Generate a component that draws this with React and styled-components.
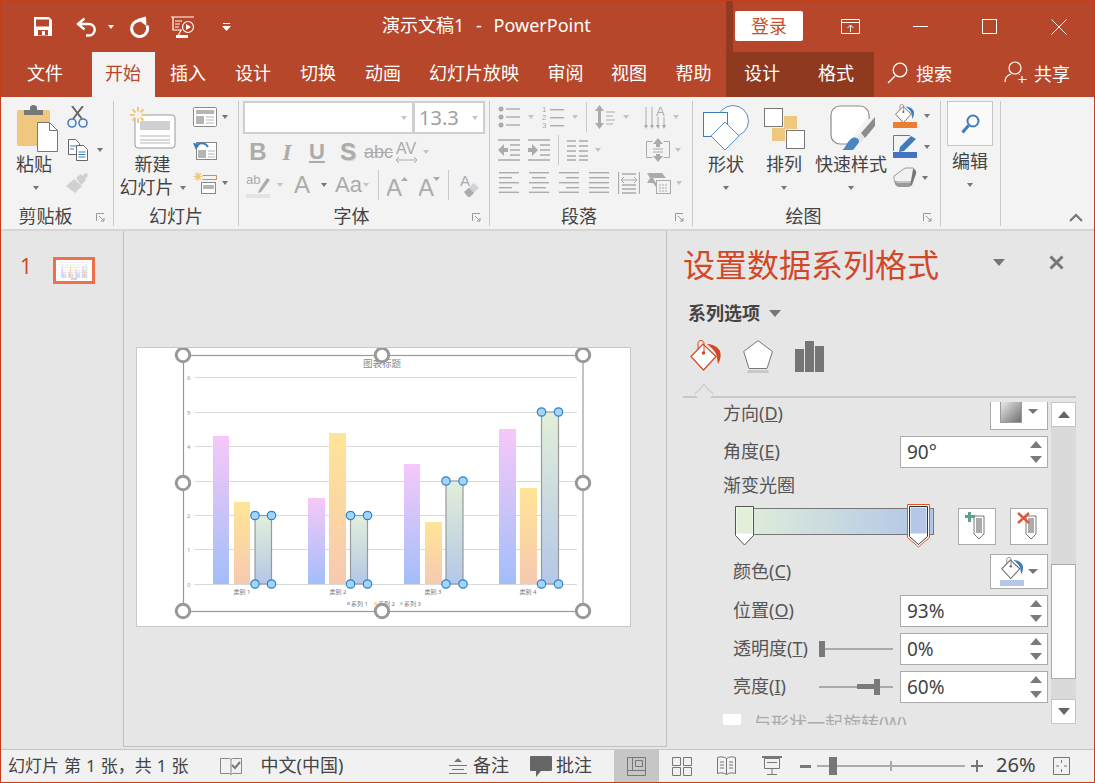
import React from "react";
import styled, { createGlobalStyle } from "styled-components";

const FONT = `"Noto Sans", "Noto Sans CJK SC", sans-serif`;
const RED = "#B7472A";
const ORANGE = "#D24726";
const GRAY = "#ABABAB";

const Global = createGlobalStyle`
  html, body { margin: 0; padding: 0; background: #E6E6E6; }
  * { box-sizing: border-box; }
`;

const Window = styled.div`
  width: 1095px;
  height: 783px;
  border: 1px solid #C43E1C;
  display: flex;
  flex-direction: column;
  overflow: hidden;
  font-family: ${FONT};
  font-size: 18px;
  color: #444;
`;

const Ico = styled.svg`
  display: block;
  flex: none;
  margin-left: ${(p) => p.$ml || 0}px;
`;

const Svg = ({ w, h, ml, children }) => (
  <Ico width={w} height={h} viewBox={`0 0 ${w} ${h}`} $ml={ml}>
    {children}
  </Ico>
);

const Caret = styled.i`
  display: block;
  flex: none;
  width: 0;
  height: 0;
  margin-left: ${(p) => p.$ml || 0}px;
  border-left: ${(p) => p.$s || 3.5}px solid transparent;
  border-right: ${(p) => p.$s || 3.5}px solid transparent;
  border-top: ${(p) => (p.$s ? p.$s * 1.1 : 4)}px solid ${(p) => p.$c || "#767676"};
`;

/* title bar */
const TitleBar = styled.header`
  height: 51px;
  flex: none;
  display: flex;
  align-items: center;
  background: ${RED};
  color: #fff;
`;

const Qat = styled.div`
  width: 381px;
  flex: none;
  display: flex;
  align-items: center;
  padding-left: 32px;
`;

const DocTitle = styled.div`
  white-space: pre;
  font-size: 18px;
  line-height: 24px;
  word-spacing: 1.2px;
  padding-bottom: 4px;
`;

const WindowControls = styled.div`
  margin-left: auto;
  width: 368px;
  height: 51px;
  flex: none;
  display: flex;
  align-items: center;
  border-left: 7px solid #93391F;
`;

const Login = styled.button`
  width: 68px;
  height: 30px;
  margin-left: 2px;
  margin-top: -2px;
  padding: 0;
  border: 0;
  border-radius: 2px;
  background: #fff;
  color: #C8502F;
  font: 18px/30px ${FONT};
`;

/* tabs */
const TabBar = styled.nav`
  height: 45px;
  flex: none;
  display: flex;
  background: ${RED};
  color: #fff;
`;

const Tab = styled.div`
  width: ${(p) => p.$w}px;
  margin-left: ${(p) => p.$ml || 0}px;
  padding-right: ${(p) => p.$pr || 0}px;
  padding-bottom: 4px;
  flex: none;
  display: flex;
  align-items: center;
  justify-content: center;
  line-height: 24px;
  background: ${(p) => (p.$active ? "#F3F3F3" : p.$context ? "#8F3A1F" : "transparent")};
  color: ${(p) => (p.$active ? RED : "#fff")};
`;

const TabExtra = styled.div`
  display: flex;
  align-items: center;
  margin-left: ${(p) => p.$ml}px;
  padding-bottom: 4px;
`;

const TabExtraText = styled.span`
  margin-left: ${(p) => p.$ml}px;
`;

/* ribbon */
const Ribbon = styled.section`
  height: 134px;
  flex: none;
  display: flex;
  padding-top: 4px;
  background: #F3F3F3;
  border-bottom: 2px solid #D6D6D6;
`;

const Group = styled.div`
  width: ${(p) => p.$w}px;
  height: 125px;
  flex: none;
  display: flex;
  flex-direction: column;
  border-right: 1px solid #C9C9C9;
`;

const GroupBody = styled.div`
  height: 102px;
  flex: none;
  display: flex;
  padding-left: ${(p) => p.$pl || 0}px;
`;

const GroupLabel = styled.div`
  position: relative;
  height: 23px;
  line-height: 26px;
  text-align: center;
  padding-right: ${(p) => p.$pr || 0}px;
  color: #444;
`;

const Launcher = styled.span`
  position: absolute;
  right: 8px;
  top: 10px;
`;

const BigTool = styled.div`
  width: ${(p) => p.$w}px;
  margin-left: ${(p) => p.$ml || 0}px;
  flex: none;
  display: flex;
  flex-direction: column;
  align-items: ${(p) => (p.$start ? "flex-start" : "center")};
  padding-top: 2px;
`;

const IconSlot = styled.div`
  height: 50px;
  display: flex;
  align-items: center;
  padding-left: ${(p) => p.$pl || 0}px;
`;

const ToolLine = styled.div`
  height: 23px;
  line-height: 23px;
  display: flex;
  align-items: center;
  white-space: nowrap;
`;

const SmallCol = styled.div`
  margin-left: ${(p) => p.$ml}px;
  margin-top: -1px;
  flex: none;
  display: flex;
  flex-direction: column;
`;

const SmallRow = styled.div`
  height: ${(p) => p.$h || 33}px;
  display: flex;
  align-items: center;
`;

const FontBoxes = styled.div`
  display: flex;
  margin-top: 1px;
`;

const FontBox = styled.div`
  width: ${(p) => p.$w}px;
  height: 33px;
  padding-right: 5px;
  padding-left: 4px;
  display: flex;
  align-items: center;
  justify-content: space-between;
  background: #fff;
  border: 2px solid #CFCFCF;
  margin-left: ${(p) => p.$ml || 0}px;
  color: #A0A0A0;
  font-size: 20px;
`;

const FontRow = styled.div`
  height: 26px;
  margin-top: ${(p) => p.$mt}px;
  display: flex;
  align-items: center;
`;

const Glyph = styled.span`
  width: ${(p) => p.$w}px;
  margin-left: ${(p) => p.$ml || 0}px;
  flex: none;
  text-align: center;
  font-family: ${(p) => p.$font || `"Liberation Sans", sans-serif`};
  font-size: ${(p) => p.$size || 22}px;
  font-weight: ${(p) => (p.$bold ? 700 : 400)};
  font-style: ${(p) => (p.$italic ? "italic" : "normal")};
  text-decoration: ${(p) => p.$deco || "none"};
  text-shadow: ${(p) => p.$shadow || "none"};
  line-height: 26px;
  color: ${GRAY};
`;

const VSep = styled.span`
  width: 1px;
  height: ${(p) => p.$h || 30}px;
  margin-left: ${(p) => p.$ml}px;
  flex: none;
  background: #C9C9C9;
`;

const StackCol = styled.div`
  flex: none;
  display: flex;
  flex-direction: column;
  margin-top: -1px;
`;

const EditTool = styled.div`
  width: 46px;
  margin-left: 6px;
  display: flex;
  flex-direction: column;
  align-items: center;
`;

const EditBox = styled.div`
  width: 46px;
  height: 45px;
  display: flex;
  align-items: center;
  justify-content: center;
  background: #FBFBFB;
  border: 1px solid #C6C6C6;
  margin-bottom: 4px;
`;

const CollapseSlot = styled.div`
  margin-left: auto;
  margin-right: 11px;
  align-self: flex-end;
  margin-bottom: 7px;
`;

/* main */
const Main = styled.main`
  height: 518px;
  flex: none;
  display: flex;
  background: #E6E6E6;
`;

const Thumbs = styled.aside`
  width: 123px;
  height: 516px;
  flex: none;
  display: flex;
  align-items: flex-start;
  padding: 26px 0 0 19px;
  border-right: 1px solid #C0C0C0;
`;

const ThumbNumber = styled.span`
  width: 33px;
  margin-top: -2px;
  font-size: 21px;
  line-height: 22px;
  color: ${ORANGE};
`;

const ThumbFrame = styled.div`
  width: 42px;
  height: 27px;
  border: 3px solid #F0704C;
  background: #fff;
`;

const Canvas = styled.div`
  width: 543px;
  height: 516px;
  flex: none;
  padding: 117px 0 0 13px;
  border-right: 1px solid #C0C0C0;
  border-bottom: 1px solid #C0C0C0;
`;

const Slide = styled.div`
  width: 493px;
  height: 278px;
  background: #fff;
  outline: 1px solid #C8C8C8;
`;

/* format pane */
const Pane = styled.aside`
  flex: 1;
  min-width: 0;
  display: flex;
  flex-direction: column;
`;

const PaneHead = styled.div`
  height: 40px;
  margin-top: 14px;
  padding: 0 30px 0 16px;
  display: flex;
  align-items: center;
`;

const PaneTitle = styled.h2`
  margin: 0;
  font-weight: 400;
  font-size: 32px;
  line-height: 40px;
  color: ${ORANGE};
`;

const PaneMenu = styled.div`
  margin-left: 54px;
  margin-top: -6px;
`;

const PaneClose = styled.div`
  margin-left: auto;
  margin-top: -6px;
`;

const PaneSub = styled.div`
  margin: 16px 0 0 21px;
  height: 24px;
  display: flex;
  align-items: center;
  font-weight: 700;
  line-height: 24px;
  color: #444;
`;

const PaneTabs = styled.div`
  height: 36px;
  margin: 15px 0 0 23px;
  display: flex;
  align-items: flex-start;
`;

const PaneRule = styled.div`
  position: relative;
  height: 2px;
  margin: 20px 18px 0 16px;
  background: #C8C8C8;
  &::after {
    content: "";
    position: absolute;
    left: 14px;
    top: -9px;
    width: 13px;
    height: 13px;
    transform: rotate(45deg);
    background: #E6E6E6;
    border-left: 1px solid #C8C8C8;
    border-top: 1px solid #C8C8C8;
  }
`;

const PaneScroll = styled.div`
  margin-top: 4px;
  height: 323px;
  display: flex;
`;

const Options = styled.div`
  width: 384px;
  flex: none;
  overflow: hidden;
  padding: 0 3px 0 56px;
  color: #555;
`;

const OptionRow = styled.div`
  height: ${(p) => p.$h || 32}px;
  margin-top: ${(p) => p.$mt ?? 6}px;
  padding-left: ${(p) => p.$pl || 0}px;
  display: flex;
  align-items: center;
  line-height: 24px;
`;

const OptionLabel = styled.span`
  margin-top: -2px;
  white-space: nowrap;
`;

const SpinBox = styled.div`
  width: 148px;
  height: 32px;
  margin-left: ${(p) => (p.$tight ? "7px" : "auto")};
  padding: 0 5px 0 6px;
  flex: none;
  display: flex;
  align-items: center;
  justify-content: space-between;
  background: #fff;
  border: 1px solid #ABABAB;
  font-size: 19px;
  color: #444;
`;

const SpinArrows = styled.div`
  display: flex;
  flex-direction: column;
  gap: 8px;
`;

const ArrowUp = styled.i`
  display: block;
  width: 0;
  height: 0;
  border-left: 6.5px solid transparent;
  border-right: 6.5px solid transparent;
  border-bottom: 7px solid #7A7A7A;
`;

const ArrowDown = styled.i`
  display: block;
  width: 0;
  height: 0;
  border-left: 6.5px solid transparent;
  border-right: 6.5px solid transparent;
  border-top: 7px solid #7A7A7A;
`;

const PickBox = styled.div`
  width: 58px;
  height: ${(p) => p.$h}px;
  margin-left: auto;
  padding: 0 9px 0 9px;
  flex: none;
  display: flex;
  align-items: ${(p) => (p.$top ? "flex-start" : "center")};
  justify-content: space-between;
  background: #fff;
  border: 1px solid #ABABAB;
`;

const PickCaret = styled.div`
  padding-top: ${(p) => p.$pt || 0}px;
`;

const DirSwatch = styled.div`
  width: 22px;
  height: 25px;
  background: linear-gradient(135deg, #F2F2F2, #6F6F6F);
  border: 1px solid #9A9A9A;
`;

const StopButton = styled.div`
  width: 38px;
  height: 37px;
  margin-left: ${(p) => p.$ml}px;
  display: flex;
  align-items: center;
  justify-content: center;
  background: #fff;
  border: 1px solid #ABABAB;
`;

const Slider = styled.div`
  position: relative;
  width: 74px;
  height: 2px;
  margin-left: auto;
  flex: none;
  background: ${GRAY};
`;

const SliderFill = styled.span`
  position: absolute;
  left: 38px;
  top: -2px;
  width: 20px;
  height: 5px;
  background: #7A7A7A;
`;

const SliderThumb = styled.span`
  position: absolute;
  left: ${(p) => p.$x}px;
  top: -7px;
  width: 6px;
  height: 16px;
  background: #7A7A7A;
`;

const CheckBox = styled.span`
  width: 18px;
  height: 18px;
  flex: none;
  background: #fff;
`;

const CheckLabel = styled.span`
  margin-left: 12px;
  white-space: nowrap;
  color: #ABABAB;
`;

const ScrollBar = styled.div`
  width: 25px;
  height: 322px;
  flex: none;
  display: flex;
  flex-direction: column;
  background: #DADADA;
`;

const ScrollButton = styled.div`
  height: 25px;
  flex: none;
  display: flex;
  align-items: center;
  justify-content: center;
  background: #fff;
  border: 1px solid #C6C6C6;
`;

const ScrollThumb = styled.div`
  height: 115px;
  margin-top: 137px;
  margin-bottom: 20px;
  background: #fff;
  border: 1px solid #ABABAB;
`;

/* status bar */
const StatusBar = styled.footer`
  height: 33px;
  flex: none;
  display: flex;
  align-items: center;
  background: #F1F1F1;
  border-top: 1px solid #C6C6C6;
  color: #444;
`;

const StatusText = styled.span`
  margin-left: ${(p) => p.$ml}px;
  padding-bottom: 4px;
  white-space: pre;
  font-size: ${(p) => p.$size || 18}px;
  word-spacing: ${(p) => p.$ws || 0}px;
`;

const StatusRight = styled.div`
  margin-left: auto;
  width: 645px;
  height: 100%;
  flex: none;
  display: flex;
  align-items: center;
`;

const ViewActive = styled.div`
  width: 45px;
  height: 100%;
  margin-left: 22px;
  flex: none;
  display: flex;
  align-items: center;
  justify-content: center;
  background: #C6C6C6;
`;

const ZoomTrack = styled.div`
  position: relative;
  width: 148px;
  height: 2px;
  margin-left: 6px;
  flex: none;
  background: ${GRAY};
`;

const ZoomTick = styled.span`
  position: absolute;
  left: 73px;
  top: -4px;
  width: 2px;
  height: 10px;
  background: ${GRAY};
`;

const ZoomThumb = styled.span`
  position: absolute;
  left: 12px;
  top: -8px;
  width: 8px;
  height: 18px;
  background: #777;
`;

/* icons */
const SaveIcon = () => (
  <Svg w={20} h={19}>
    <path
      fill="#fff"
      fillRule="evenodd"
      d="M1 0h15l3 3v16H1zM3 2.500v7h13v-7zM5 13v5.500h10V13zM9 14h3v4H9z"
    />
  </Svg>
);
const UndoIcon = () => (
  <Svg w={22} h={20} ml={23}>
    <path fill="none" stroke="#fff" strokeWidth="2.400" d="M8.500 1.500 2 7l6.500 5.500M2.500 7H13a5.700 5.700 0 0 1 0 11.500h-3" />
  </Svg>
);
const RedoIcon = () => (
  <Svg w={21} h={22} ml={15}>
    <path fill="none" stroke="#fff" strokeWidth="3" d="M11 4.500A8 8 0 1 0 18 9.500" />
    <path fill="#fff" d="M8 3 17 .5l.5 9.500z" />
  </Svg>
);
const ShowIcon = () => (
  <Svg w={24} h={22} ml={21}>
    <g fill="none" stroke="#fff" strokeWidth="1.200">
      <path d="M0 1h23M2 1v13h9M10 14l-3 6M11 5H4M9 8H4M8 11H4" />
      <circle cx="17" cy="11" r="5.500" />
    </g>
    <path fill="#fff" d="M15 8l5 3-5 3zM5 19h12v3H5z" />
  </Svg>
);
const CustomizeIcon = () => (
  <Svg w={9} h={8} ml={27}>
    <path fill="#fff" d="M1 0h7v1H1zM0 3h9L4.500 8z" />
  </Svg>
);
const RibbonModeIcon = () => (
  <Svg w={20} h={16} ml={38}>
    <path fill="none" stroke="#fff" d="M.5.500h18v14H.5zM.5 3.500h18M9.500 13V6.500M6.500 9l3-3 3 3" />
  </Svg>
);
const MinimizeIcon = () => (
  <Svg w={15} h={2} ml={52}>
    <rect width="15" height="1" fill="#fff" />
  </Svg>
);
const MaximizeIcon = () => (
  <Svg w={15} h={15} ml={54}>
    <rect x=".5" y=".5" width="14" height="14" fill="none" stroke="#fff" />
  </Svg>
);
const CloseIcon = () => (
  <Svg w={16} h={16} ml={54}>
    <path stroke="#fff" d="M.500.500l15 15M15.500.500l-15 15" />
  </Svg>
);
const SearchTabIcon = () => (
  <Svg w={21} h={22}>
    <path fill="none" stroke="#fff" strokeWidth="1.300" d="M1 21l7-7" />
    <circle cx="13" cy="8" r="6.800" fill="none" stroke="#fff" strokeWidth="1.300" />
  </Svg>
);
const PersonIcon = () => (
  <Svg w={23} h={23}>
    <circle cx="11" cy="7" r="6" fill="none" stroke="#fff" strokeWidth="1.200" />
    <path fill="none" stroke="#fff" strokeWidth="1.200" d="M1 21c0-4 3-7 6-8M15 13.500h1M18 15v7M14.500 18.500h8" />
  </Svg>
);

const PasteIcon = () => (
  <Svg w={42} h={47}>
    <rect x="0" y="5" width="33" height="36" rx="2" fill="#EFC77F" />
    <path fill="#777" d="M7 5h6V2.500C13 1 14.500 0 16.500 0S20 1 20 2.500V5h6v5H7z" />
    <path fill="#fff" stroke="#777" d="M20.500 17.500h12l8 8v21h-20z" />
    <path fill="none" stroke="#777" d="M32.500 17.500v8h8" />
  </Svg>
);
const CutIcon = () => (
  <Svg w={21} h={22} ml={1}>
    <path stroke="#666" strokeWidth="2" d="M6 13 16 0M15 13 5 0" />
    <circle cx="5" cy="17" r="4" fill="none" stroke="#4A7EBB" strokeWidth="1.600" />
    <circle cx="16" cy="17" r="4" fill="none" stroke="#4A7EBB" strokeWidth="1.600" />
  </Svg>
);
const CopyIcon = () => (
  <Svg w={20} h={22} ml={2}>
    <path fill="#fff" stroke="#666" d="M.5.500h7l4 4v11H.5z" />
    <path fill="#fff" stroke="#666" d="M8.500 6.500h7l4 4v11h-11z" />
    <path stroke="#3F7DB8" d="M2 7h6M2 10h4M10.500 13h7M10.500 15.500h7M10.500 18h7" />
  </Svg>
);
const PainterIcon = () => (
  <Svg w={24} h={20}>
    <path fill="#D2CFD2" d="M0 13 8 6l8 7-7 7zM10 5l5-4 1 2 2-2 2-1 2 1-1 3-2 2 1 1-5 5z" />
  </Svg>
);
const NewSlideIcon = () => (
  <Svg w={46} h={42}>
    <rect x="5" y="8" width="40" height="33" rx="3" fill="#fff" stroke="#999" />
    <rect x="10" y="14" width="30" height="9" fill="#D0D0D0" />
    <path stroke="#B5B5B5" d="M10 29h30M10 33h30M10 36h30" />
    <g stroke="#EFC77F" strokeWidth="2">
      <path d="M8 0v16M0 8h16M2.500 2.500l11 11M13.500 2.500l-11 11" />
    </g>
    <circle cx="8" cy="8" r="3.500" fill="#F3F3F3" />
  </Svg>
);
const LayoutIcon = () => (
  <Svg w={24} h={20}>
    <rect x=".5" y=".5" width="23" height="19" rx="1" fill="#fff" stroke="#888" />
    <rect x="3" y="3" width="18" height="4" fill="#B5B5B5" />
    <rect x="3" y="9" width="8" height="8" fill="#B5B5B5" />
    <path stroke="#B5B5B5" d="M13 10h8M13 13h8M13 16h8" />
  </Svg>
);
const ResetIcon = () => (
  <Svg w={24} h={20}>
    <rect x="3.500" y="2.500" width="20" height="17" fill="#fff" stroke="#888" />
    <rect x="5" y="10" width="8" height="8" fill="#B5B5B5" />
    <path stroke="#B5B5B5" d="M15 11h7M15 14h7M15 17h7" />
    <path fill="none" stroke="#3F7DB8" strokeWidth="2" d="M3 7c2-5 9-5 12 0" />
    <path fill="#3F7DB8" d="M0 3l7 1-4 6z" />
  </Svg>
);
const SectionIcon = () => (
  <Svg w={24} h={22}>
    <path stroke="#EFC77F" strokeWidth="1.200" d="M5 0v9M.5 4.500h9M2 1.500l6 6M8 1.500l-6 6" />
    <path fill="none" stroke="#E08A3C" d="M9.500 3.500h14v4h-14" />
    <rect x="8.500" y="10.500" width="14" height="11" fill="#fff" stroke="#888" />
    <rect x="10" y="13" width="11" height="4" fill="#B5B5B5" />
  </Svg>
);
const Launch = () => (
  <Launcher>
    <Svg w={9} h={9}>
      <path fill="none" stroke="#999" d="M.5 8V.5H8M3 3l5 5M8 5v3H5" />
    </Svg>
  </Launcher>
);
const AvIcon = () => (
  <Svg w={24} h={26} ml={3}>
    <text x="1" y="15" fontSize="16" fontFamily="Liberation Sans" fill={GRAY}>AV</text>
    <path fill="none" stroke={GRAY} d="M1 21h21M4 18l-3 3 3 3M19 18l3 3-3 3" />
  </Svg>
);
const PenIcon = () => (
  <Svg w={24} h={25} ml={3}>
    <rect x="0" y="21" width="24" height="4" fill="#E6E1E6" />
    <path fill={GRAY} d="M13 17 21 5l3 2-9 12-3 1z" />
    <text x="0" y="11" fontSize="13" fontFamily="Liberation Sans" fill={GRAY}>ab</text>
  </Svg>
);
const GrowIcon = ({ ml, down }) => (
  <Svg w={21} h={32} ml={ml}>
    <text x="-1" y="27" fontSize="24" fontFamily="Liberation Sans" fill={GRAY}>A</text>
    <path fill={GRAY} d={down ? "M14 8h7l-3.500 4z" : "M14 12h7l-3.500-4z"} />
  </Svg>
);
const ClearIcon = () => (
  <Svg w={20} h={24} ml={11}>
    <text x="0" y="13" fontSize="15" fontFamily="Liberation Sans" fill={GRAY}>A</text>
    <path fill="#D4D0D4" d="M4 19 14 10l5 5-10 9z" />
    <path fill={GRAY} d="M4 19l5-4 5 5-4 4H8z" />
  </Svg>
);
const Lines = ({ w, h, ml, rows, sw = 1.4 }) => (
  <Svg w={w} h={h} ml={ml}>
    {rows.map(([a, b, y], i) => (
      <rect key={i} x={a} y={y} width={b - a} height={sw} fill={GRAY} />
    ))}
  </Svg>
);
const BulletsIcon = () => (
  <Svg w={22} h={22}>
    {[3, 11, 19].map((y) => (
      <g key={y}>
        <circle cx="3" cy={y} r="2.500" fill={GRAY} />
        <rect x="8" y={y - 0.7} width="14" height="1.400" fill={GRAY} />
      </g>
    ))}
  </Svg>
);
const NumbersIcon = () => (
  <Svg w={22} h={24} ml={8}>
    {[1, 2, 3].map((n, i) => (
      <g key={n}>
        <text x="0" y={7 + i * 8} fontSize="8" fontFamily="Liberation Sans" fill={GRAY}>{n}</text>
        <rect x="8" y={4 + i * 8} width="14" height="1.400" fill={GRAY} />
      </g>
    ))}
  </Svg>
);
const SpacingIcon = () => (
  <Svg w={20} h={24} ml={8}>
    <path fill={GRAY} d="M4.500 0 9 6H6v12h3l-4.500 6L0 18h3V6H0z" />
    <path stroke={GRAY} d="M11 7h9M11 11h7M11 15h9M11 19h7" />
  </Svg>
);
const VerticalIcon = () => (
  <Svg w={24} h={28} ml={15}>
    <path stroke={GRAY} d="M2 4v20M8 4v20M14 14v10M20 14v10" />
    <path fill={GRAY} d="M0 22h4l-2 4zM6 22h4l-2 4zM12 22h4l-2 4zM18 22h4l-2 4z" />
    <text x="12" y="13" fontSize="13" fontFamily="Liberation Sans" fill={GRAY}>A</text>
  </Svg>
);
const OutdentIcon = ({ ml, flip }) => (
  <Svg w={22} h={22} ml={ml}>
    <path stroke={GRAY} strokeWidth="1.400" d="M0 1h22M12 6h10M12 11h10M12 16h10M0 21h22" />
    <path fill={GRAY} d={flip ? "M0 9h4V5l6 6-6 6v-4H0z" : "M10 9H6V5l-6 6 6 6v-4h4z"} />
  </Svg>
);
const ColumnsIcon = () => (
  <Svg w={21} h={22} ml={8}>
    <path stroke={GRAY} strokeWidth="1.400" d="M0 2h9M12 2h9M0 7h9M12 7h9M0 12h9M12 12h9M0 17h9M12 17h9M0 21h9M12 21h9" />
  </Svg>
);
const AlignBoxIcon = () => (
  <Svg w={24} h={24} ml={45}>
    <path fill="none" stroke={GRAY} d="M.5 3.500h6M17.500 3.500h6v16h-6M6.500 19.500h-6v-16" />
    <path stroke={GRAY} d="M7 11h10M7 14h10" />
    <path fill={GRAY} d="M12 0l5 6h-3v3h-4V6H7zM12 24l5-6h-3v-2h-4v2H7z" />
  </Svg>
);
const AlignIcon = ({ ml, kind }) => {
  const short = { left: [0, 13], center: [3, 17], right: [7, 20], just: [0, 20] }[kind];
  return (
    <Lines
      w={20}
      h={21}
      ml={ml}
      rows={[
        [0, 20, 0],
        [short[0], short[1], 5],
        [0, 20, 10],
        [short[0], short[1], 15],
        [0, 20, 19.600],
      ]}
    />
  );
};
const DistributeIcon = () => (
  <Svg w={22} h={22} ml={9}>
    <path stroke={GRAY} d="M.5 0v22M21.500 0v22" strokeWidth="1.200" />
    <path stroke={GRAY} strokeWidth="1.400" d="M4 2h14M4 13h14M4 17h14M4 21h14" />
    <path fill="none" stroke={GRAY} d="M3 8h16M6 5 3 8l3 3M16 5l3 3-3 3" />
  </Svg>
);
const SmartArtIcon = () => (
  <Svg w={24} h={22} ml={7}>
    <path fill={GRAY} d="M0 1h15l4 5H6l3 5v4L6 11H0l3-5z" />
    <rect x="9.500" y="8.500" width="14" height="13" fill="#F3F3F3" stroke={GRAY} />
    <path stroke={GRAY} strokeDasharray="2 1" d="M12 13h9M12 16h9M12 19h9" />
  </Svg>
);
const ShapesIcon = () => (
  <Svg w={46} h={46}>
    <circle cx="30" cy="16" r="15.500" fill="#fff" stroke="#5B8DC6" />
    <rect x=".5" y="7.500" width="24" height="24" fill="#fff" stroke="#3F7DB8" />
    <path fill="#fff" stroke="#5B8DC6" d="M22 17l14 14-14 14L8 31z" />
  </Svg>
);
const ArrangeIcon = () => (
  <Svg w={41} h={41}>
    <rect x="20" y="8" width="13" height="13" fill="#EFC77F" />
    <rect x="8" y="20" width="13" height="13" fill="#EFC77F" />
    <rect x=".5" y=".5" width="18" height="18" fill="#fff" stroke="#777" />
    <rect x="22.500" y="22.500" width="18" height="18" fill="#fff" stroke="#777" />
  </Svg>
);
const QuickStyleIcon = () => (
  <Svg w={49} h={46}>
    <g transform="translate(3 0)">
      <rect x="1" y="1" width="38" height="38" rx="9" fill="#fff" stroke="#8C8C8C" strokeWidth="1.200" />
      <path fill="#F3F3F3" d="M36 14h10v16L34 46H12z" />
      <path fill="#8C8C8C" d="M31 28 45 12v9L35 33z" />
      <path fill="#E4E4E4" d="M30 29l4 4-3 5-4-5z" />
      <path fill="#4A86C0" d="M12 45c3-1 4-7 9-11 2-2 5-2 7 0s1 4-1 6l-4 5z" />
    </g>
  </Svg>
);
const Bucket = ({ line, drip, thin }) => (
  <g>
    <path fill="#fff" stroke={line} strokeWidth={thin ? 1.400 : 1.200} d="M1 16.500 13 4 26 16.500 13.500 30z" />
    <path fill="none" stroke={line} d="M8 9V3.500C8 1.500 9.500.5 11 .5s3 1 3 3V13" />
    <circle cx="13.500" cy="13" r="1.700" fill={line} />
    <path fill={drip} d="M17 4c5 0 10 2 13 7 1 4 1 8-2 13-1-5-1-8-2-10-1-3-5-7-9-10z" />
  </g>
);
const FillIcon = () => (
  <Svg w={24} h={24}>
    <g transform="translate(2 0) scale(.62)">
      <Bucket line="#666" drip="#3F7DB8" thin />
    </g>
    <rect y="18" width="24" height="6" fill="#ED7D31" />
  </Svg>
);
const OutlineIcon = () => (
  <Svg w={24} h={24}>
    <path fill="none" stroke="#777" d="M.5 16V.5H17" />
    <path fill="#3F7DB8" d="M7 12 18 1l5 3-12 12-5 1z" />
    <rect y="17" width="24" height="6" fill="#4472C4" />
  </Svg>
);
const EffectIcon = () => (
  <Svg w={25} h={22}>
    <path fill="#F2F2F2" stroke="#999" d="M1 9 12 1h8q3 1 2 5l-4 9H5Q0 15 1 9z" />
    <path fill="#777" d="M20 2q4 1 3 5l-4 11-3 2 2-6z" />
    <path fill="#999" d="M1 12q1 4 5 4h12l-2 4H6q-5-1-5-8z" />
  </Svg>
);
const EditSearchIcon = () => (
  <Svg w={19} h={20}>
    <circle cx="12" cy="7" r="5.500" fill="none" stroke="#3F7DB8" strokeWidth="2" />
    <path stroke="#3F7DB8" strokeWidth="3" d="M1.500 18.500l6-7" />
  </Svg>
);
const PaneBucket = () => (
  <Svg w={33} h={34}>
    <Bucket line={ORANGE} drip={ORANGE} />
  </Svg>
);
const PentagonIcon = () => (
  <Svg w={31} h={36} ml={20}>
    <path fill="#fff" stroke="#777" d="M15 .7 29.500 11.500 24 28.500H6L.7 11.500z" />
    <path fill="#AAA" d="M5 30h20l1 3H4z" opacity=".5" />
  </Svg>
);
const BarsIcon = () => (
  <Svg w={30} h={32} ml={21}>
    <path fill="#757575" d="M0 9h9v23H0zM10 1h9v31h-9zM20 6h9v26h-9z" />
  </Svg>
);
const StopAddIcon = () => (
  <Svg w={24} h={28}>
    <path fill="#fff" stroke="#777" d="M9 4h10v18l-5 5-5-5z" />
    <rect x="11" y="6" width="6" height="15" fill="#ABABAB" />
    <path fill="#5FA08C" d="M3 0h3v3h4v3H6v4H3V6H0V3h3z" />
  </Svg>
);
const StopRemoveIcon = () => (
  <Svg w={24} h={28}>
    <path fill="#fff" stroke="#777" d="M9 4h10v18l-5 5-5-5z" />
    <rect x="11" y="6" width="6" height="15" fill="#ABABAB" />
    <path stroke="#DB5A3B" strokeWidth="2.400" d="M1 1l11 10M12 1 1 11" />
  </Svg>
);
const GradientStops = () => (
  <Svg w={200} h={44} ml={12}>
    <defs>
      <linearGradient id="stopBar">
        <stop offset="0" stopColor="#E2EFD9" />
        <stop offset="0.930" stopColor="#B4C7E7" />
      </linearGradient>
    </defs>
    <rect x=".5" y="4.500" width="198" height="26" fill="url(#stopBar)" stroke="#777" />
    <path fill="#fff" stroke="#555" d="M.5 2.500h18v29l-9 9.500-9-9.500z" />
    <rect x="1.500" y="3.500" width="16" height="26" fill="#E2EFD9" />
    <path fill="#fff" stroke="#E8501F" d="M172.500.5h22v33L183.500 43l-11-9.500z" />
    <path fill="#fff" stroke="#333" d="M174.500 2.500h18v30l-9 8-9-8z" />
    <rect x="175.500" y="3.500" width="16" height="26" fill="#B4C7E7" />
  </Svg>
);
const ColorBucket = () => (
  <Svg w={24} h={30}>
    <g transform="translate(1 0) scale(.72)">
      <Bucket line="#666" drip="#3F7DB8" thin />
    </g>
    <rect y="23" width="24" height="6" fill="#B4C7E7" />
  </Svg>
);
const ScrollTriangle = ({ down }) => (
  <Svg w={12} h={7}>
    <path fill="#666" d={down ? "M0 0h12L6 7z" : "M0 7h12L6 0z"} />
  </Svg>
);

/* slide chart */
const CATEGORIES = [
  { label: "类别 1", x: 242, bars: [[213, 229, 436], [234, 250, 502], [255, 271.500, 515.500]] },
  { label: "类别 2", x: 338, bars: [[308, 325, 498], [329, 346, 433], [350.500, 367.500, 515.500]] },
  { label: "类别 3", x: 433, bars: [[404, 420, 464], [425, 442, 522], [446, 463, 481]] },
  { label: "类别 4", x: 528, bars: [[499, 516, 429], [520, 537, 488], [541.500, 558.500, 412]] },
];
const GRID = [377.500, 412.500, 446.500, 481.500, 515.500, 549.500, 584.500];
const BIG_HANDLES = [[183, 355], [382, 355], [583, 355], [183, 483], [583, 483], [183, 611], [382, 611], [583, 611]];
const LEGEND = [[347, "#B9C0F8"], [374, "#FBD9A0"], [400, "#CBDCE0"]];

const ChartGradients = ({ prefix }) => (
  <defs>
    <linearGradient id={`${prefix}0`} x1="0" y1="0" x2="0" y2="1">
      <stop offset="0" stopColor="#F6C8F8" />
      <stop offset="1" stopColor="#A2BEF9" />
    </linearGradient>
    <linearGradient id={`${prefix}1`} x1="0" y1="0" x2="0" y2="1">
      <stop offset="0" stopColor="#FFE596" />
      <stop offset="1" stopColor="#F7C9B0" />
    </linearGradient>
    <linearGradient id={`${prefix}2`} x1="0" y1="0" x2="0" y2="1">
      <stop offset="0" stopColor="#E2EFD9" />
      <stop offset="1" stopColor="#B4C7E7" />
    </linearGradient>
  </defs>
);

const Chart = () => (
  <svg width="493" height="278" viewBox="137 348 493 278" style={{ display: "block" }} fontFamily={FONT}>
    <ChartGradients prefix="big" />
    <rect x="183.500" y="355.500" width="399.500" height="256" fill="none" stroke="#999" strokeWidth="1.200" />
    {GRID.map((y) => (
      <rect key={y} x="194" y={y - 0.5} width="383" height="1" fill="#D9D9D9" />
    ))}
    {GRID.map((y, i) => (
      <text key={y} x="187" y={y + 2} fontSize="6" fill="#999">{6 - i}</text>
    ))}
    <text x="382" y="367" fontSize="9.500" fill="#8A8A8A" textAnchor="middle">图表标题</text>
    {CATEGORIES.map((c) => (
      <g key={c.label}>
        {c.bars.map(([a, b, top], i) => (
          <rect
            key={i}
            x={a}
            y={top}
            width={b - a}
            height={584 - top}
            fill={`url(#big${i})`}
            stroke={i === 2 ? "#999" : "none"}
            strokeWidth="1.200"
          />
        ))}
        <text x={c.x} y="594" fontSize="6" fill="#777" textAnchor="middle">{c.label}</text>
        {[[c.bars[2][0], c.bars[2][2]], [c.bars[2][1], c.bars[2][2]], [c.bars[2][0], 584], [c.bars[2][1], 584]].map(([x, y]) => (
          <circle key={`${x}${y}`} cx={x} cy={y} r="4.200" fill="#ABD2F0" stroke="#1E88DC" strokeWidth="1.200" />
        ))}
      </g>
    ))}
    {LEGEND.map(([x, color], i) => (
      <g key={x}>
        <rect x={x} y="602" width="3" height="3" fill={color} />
        <text x={x + 4} y="606" fontSize="6" fill="#777">系列 {i + 1}</text>
      </g>
    ))}
    {BIG_HANDLES.map(([x, y]) => (
      <circle key={`${x}-${y}`} cx={x} cy={y} r="6.700" fill="#fff" stroke="#999" strokeWidth="3" />
    ))}
  </svg>
);

const MiniChart = () => (
  <svg width="36" height="21" viewBox="137 348 494 279" style={{ display: "block" }}>
    <ChartGradients prefix="mini" />
    {GRID.map((y) => (
      <rect key={y} x="194" y={y - 4} width="383" height="8" fill="#E0E0E0" />
    ))}
    {CATEGORIES.map((c) =>
      c.bars.map(([a, b, top], i) => (
        <rect key={`${c.label}${i}`} x={a} y={top} width={b - a} height={584 - top} fill={`url(#mini${i})`} />
      ))
    )}
    <rect x="340" y="596" width="85" height="16" fill="#BBB" />
  </svg>
);

const Spin = ({ value, tight }) => (
  <SpinBox $tight={tight}>
    {value}
    <SpinArrows>
      <ArrowUp />
      <ArrowDown />
    </SpinArrows>
  </SpinBox>
);

const TABS = [
  { t: "文件", w: 91, pr: 3 },
  { t: "开始", w: 63, pr: 1, active: true },
  { t: "插入", w: 66 },
  { t: "设计", w: 65, pr: 1 },
  { t: "切换", w: 65, pr: 1 },
  { t: "动画", w: 64 },
  { t: "幻灯片放映", w: 118 },
  { t: "审阅", w: 65 },
  { t: "视图", w: 63, pr: 1 },
  { t: "帮助", w: 65 },
  { t: "设计", w: 72, context: true },
  { t: "格式", w: 76, context: true },
];

const App = () => (
  <Window>
    <Global />
    <TitleBar>
      <Qat>
        <SaveIcon />
        <UndoIcon />
        <Caret $ml={10} $c="#fff" />
        <RedoIcon />
        <ShowIcon />
        <CustomizeIcon />
      </Qat>
      <DocTitle>演示文稿1  -  PowerPoint</DocTitle>
      <WindowControls>
        <Login>登录</Login>
        <RibbonModeIcon />
        <MinimizeIcon />
        <MaximizeIcon />
        <CloseIcon />
      </WindowControls>
    </TitleBar>

    <TabBar>
      {TABS.map((tab, i) => (
        <Tab key={i} $w={tab.w} $pr={tab.pr} $active={tab.active} $context={tab.context}>
          {tab.t}
        </Tab>
      ))}
      <TabExtra $ml={13}>
        <SearchTabIcon />
        <TabExtraText $ml={8}>搜索</TabExtraText>
      </TabExtra>
      <TabExtra $ml={52}>
        <PersonIcon />
        <TabExtraText $ml={7}>共享</TabExtraText>
      </TabExtra>
    </TabBar>

    <Ribbon>
      <Group $w={113}>
        <GroupBody $pl={15}>
          <BigTool $w={43} $start>
            <IconSlot $pl={1}>
              <PasteIcon />
            </IconSlot>
            <ToolLine>粘贴</ToolLine>
            <ToolLine>
              <Caret $ml={17} />
            </ToolLine>
          </BigTool>
          <SmallCol $ml={7}>
            <SmallRow><CutIcon /></SmallRow>
            <SmallRow>
              <CopyIcon />
              <Caret $ml={9} />
            </SmallRow>
            <SmallRow><PainterIcon /></SmallRow>
          </SmallCol>
        </GroupBody>
        <GroupLabel $pr={23}>
          剪贴板
          <Launch />
        </GroupLabel>
      </Group>

      <Group $w={125}>
        <GroupBody $pl={5}>
          <BigTool $w={67}>
            <IconSlot>
              <NewSlideIcon />
            </IconSlot>
            <ToolLine>新建</ToolLine>
            <ToolLine>
              幻灯片
              <Caret $ml={6} />
            </ToolLine>
          </BigTool>
          <SmallCol $ml={7}>
            <SmallRow>
              <LayoutIcon />
              <Caret $ml={5} />
            </SmallRow>
            <SmallRow><ResetIcon /></SmallRow>
            <SmallRow>
              <SectionIcon />
              <Caret $ml={5} />
            </SmallRow>
          </SmallCol>
        </GroupBody>
        <GroupLabel>幻灯片</GroupLabel>
      </Group>

      <Group $w={251}>
        <GroupBody $pl={4}>
          <StackCol>
            <FontBoxes>
              <FontBox $w={171}>
                <span />
                <Caret $c="#C4C4C4" />
              </FontBox>
              <FontBox $w={72} $ml={-1}>
                13.3
                <Caret $c="#C4C4C4" />
              </FontBox>
            </FontBoxes>
            <FontRow $mt={5}>
              <Glyph $w={22} $ml={4} $bold $size={24}>B</Glyph>
              <Glyph $w={22} $ml={7} $bold $italic $size={24} $font={`"Liberation Serif", serif`}>I</Glyph>
              <Glyph $w={22} $ml={8} $bold $size={22} $deco="underline">U</Glyph>
              <Glyph $w={22} $ml={9} $bold $size={24} $shadow="1px 1px 1px #CFCFCF">S</Glyph>
              <Glyph $w={28} $ml={5} $size={18} $deco="line-through">abc</Glyph>
              <AvIcon />
              <Caret $ml={4} $c="#C4C4C4" />
            </FontRow>
            <FontRow $mt={7}>
              <PenIcon />
              <Caret $ml={7} $c="#C4C4C4" />
              <Glyph $w={15} $ml={11} $size={24}>A</Glyph>
              <Caret $ml={12} />
              <Glyph $w={23} $ml={8} $size={22}>Aa</Glyph>
              <Caret $ml={5} $c="#C4C4C4" />
              <VSep $ml={9} />
              <GrowIcon ml={8} />
              <GrowIcon ml={11} down />
              <VSep $ml={8} />
              <ClearIcon />
            </FontRow>
          </StackCol>
        </GroupBody>
        <GroupLabel $pr={25}>
          字体
          <Launch />
        </GroupLabel>
      </Group>

      <Group $w={203}>
        <GroupBody $pl={8}>
          <SmallCol $ml={0}>
            <SmallRow>
              <BulletsIcon />
              <Caret $ml={8} $c="#C4C4C4" />
              <NumbersIcon />
              <Caret $ml={8} $c="#C4C4C4" />
              <VSep $ml={8} />
              <SpacingIcon />
              <Caret $ml={8} $c="#C4C4C4" />
              <VerticalIcon />
              <Caret $ml={5} $c="#C4C4C4" />
            </SmallRow>
            <SmallRow>
              <OutdentIcon />
              <OutdentIcon ml={8} flip />
              <VSep $ml={8} />
              <ColumnsIcon />
              <Caret $ml={7} $c="#C4C4C4" />
              <AlignBoxIcon />
              <Caret $ml={5} $c="#C4C4C4" />
            </SmallRow>
            <SmallRow>
              <AlignIcon ml={1} kind="left" />
              <AlignIcon ml={10} kind="center" />
              <AlignIcon ml={10} kind="right" />
              <AlignIcon ml={10} kind="just" />
              <DistributeIcon />
              <SmartArtIcon />
              <Caret $ml={5} $c="#C4C4C4" />
            </SmallRow>
          </SmallCol>
        </GroupBody>
        <GroupLabel $pr={24}>
          段落
          <Launch />
        </GroupLabel>
      </Group>

      <Group $w={248}>
        <GroupBody $pl={10}>
          <BigTool $w={46}>
            <IconSlot><ShapesIcon /></IconSlot>
            <ToolLine>形状</ToolLine>
            <ToolLine><Caret /></ToolLine>
          </BigTool>
          <BigTool $w={46} $ml={12}>
            <IconSlot><ArrangeIcon /></IconSlot>
            <ToolLine>排列</ToolLine>
            <ToolLine><Caret /></ToolLine>
          </BigTool>
          <BigTool $w={72} $ml={8}>
            <IconSlot><QuickStyleIcon /></IconSlot>
            <ToolLine>快速样式</ToolLine>
            <ToolLine><Caret /></ToolLine>
          </BigTool>
          <SmallCol $ml={6}>
            <SmallRow $h={31}>
              <FillIcon />
              <Caret $ml={7} />
            </SmallRow>
            <SmallRow $h={31}>
              <OutlineIcon />
              <Caret $ml={7} />
            </SmallRow>
            <SmallRow $h={31}>
              <EffectIcon />
              <Caret $ml={4} />
            </SmallRow>
          </SmallCol>
        </GroupBody>
        <GroupLabel $pr={26}>
          绘图
          <Launch />
        </GroupLabel>
      </Group>

      <Group $w={60}>
        <GroupBody>
          <EditTool>
            <EditBox><EditSearchIcon /></EditBox>
            <ToolLine>编辑</ToolLine>
            <ToolLine><Caret /></ToolLine>
          </EditTool>
        </GroupBody>
      </Group>

      <CollapseSlot>
        <Svg w={14} h={9}>
          <path fill="none" stroke="#777" strokeWidth="2.200" d="M1 8l6-6 6 6" />
        </Svg>
      </CollapseSlot>
    </Ribbon>

    <Main>
      <Thumbs>
        <ThumbNumber>1</ThumbNumber>
        <ThumbFrame><MiniChart /></ThumbFrame>
      </Thumbs>
      <Canvas>
        <Slide><Chart /></Slide>
      </Canvas>
      <Pane>
        <PaneHead>
          <PaneTitle>设置数据系列格式</PaneTitle>
          <PaneMenu><Caret $s={6.500} /></PaneMenu>
          <PaneClose>
            <Svg w={15} h={15}>
              <path stroke="#777" strokeWidth="3" d="M1.500 1.500l12 12M13.500 1.500l-12 12" />
            </Svg>
          </PaneClose>
        </PaneHead>
        <PaneSub>
          系列选项
          <Caret $s={6.500} $ml={9} />
        </PaneSub>
        <PaneTabs>
          <PaneBucket />
          <PentagonIcon />
          <BarsIcon />
        </PaneTabs>
        <PaneRule />
        <PaneScroll>
          <Options>
            <OptionRow $h={33} $mt={-5}>
              <OptionLabel>方向(<u>D</u>)</OptionLabel>
              <PickBox $h={33} $top>
                <DirSwatch />
                <PickCaret $pt={11}><Caret $s={5} /></PickCaret>
              </PickBox>
            </OptionRow>
            <OptionRow>
              <OptionLabel>角度(<u>E</u>)</OptionLabel>
              <Spin value="90°" />
            </OptionRow>
            <OptionRow $h={24}>
              <OptionLabel>渐变光圈</OptionLabel>
            </OptionRow>
            <OptionRow $h={44}>
              <GradientStops />
              <StopButton $ml={23}><StopAddIcon /></StopButton>
              <StopButton $ml={14}><StopRemoveIcon /></StopButton>
            </OptionRow>
            <OptionRow $h={35} $pl={10}>
              <OptionLabel>颜色(<u>C</u>)</OptionLabel>
              <PickBox $h={35}>
                <ColorBucket />
                <Caret $s={5} />
              </PickBox>
            </OptionRow>
            <OptionRow $pl={10}>
              <OptionLabel>位置(<u>O</u>)</OptionLabel>
              <Spin value="93%" />
            </OptionRow>
            <OptionRow $pl={10}>
              <OptionLabel>透明度(<u>T</u>)</OptionLabel>
              <Slider>
                <SliderThumb $x={0} />
              </Slider>
              <Spin value="0%" tight />
            </OptionRow>
            <OptionRow $pl={10}>
              <OptionLabel>亮度(<u>I</u>)</OptionLabel>
              <Slider>
                <SliderFill />
                <SliderThumb $x={55} />
              </Slider>
              <Spin value="60%" tight />
            </OptionRow>
            <OptionRow $h={24} $mt={8}>
              <CheckBox />
              <CheckLabel>与形状一起旋转(<u>W</u>)</CheckLabel>
            </OptionRow>
          </Options>
          <ScrollBar>
            <ScrollButton><ScrollTriangle /></ScrollButton>
            <ScrollThumb />
            <ScrollButton><ScrollTriangle down /></ScrollButton>
          </ScrollBar>
        </PaneScroll>
      </Pane>
    </Main>

    <StatusBar>
      <StatusText $ml={7} $size={17} $ws={0.6}>幻灯片 第 1 张，共 1 张</StatusText>
      <Svg w={22} h={20} ml={31}>
        <path fill="none" stroke="#888" d="M.5 2.500h9l1.500 1v15l-1.500-1h-9zM11 3.500l1.500-1H21.500v15H12.500L11 18.500" />
        <path fill="none" stroke="#777" strokeWidth="2" d="M12 9l3 3 5-6" />
      </Svg>
      <StatusText $ml={19}>中文(中国)</StatusText>
      <StatusRight>
        <Svg w={18} h={16}>
          <path fill="#777" d="M9 0l4 4H5zM0 7h18v1H0zM3 11h12v1H3zM0 15h18v1H0z" />
        </Svg>
        <StatusText $ml={6}>备注</StatusText>
        <Svg w={22} h={21} ml={21}>
          <path fill="#666" d="M1 0h20a1 1 0 0 1 1 1v13a1 1 0 0 1-1 1H11l-5 6v-6H1a1 1 0 0 1-1-1V1a1 1 0 0 1 1-1z" />
        </Svg>
        <StatusText $ml={4}>批注</StatusText>
        <ViewActive>
          <Svg w={19} h={19}>
            <path fill="none" stroke="#777" d="M.5.500h18v18H.5zM5.500.500v13M.5 13.500h18M8.500 3.500h7v6h-7z" />
          </Svg>
        </ViewActive>
        <Svg w={20} h={19} ml={13}>
          <path fill="none" stroke="#777" d="M.5.500h8v8h-8zM11.500.500h8v8h-8zM.5 10.500h8v8h-8zM11.500 10.500h8v8h-8z" />
        </Svg>
        <Svg w={19} h={20} ml={25}>
          <path fill="none" stroke="#777" d="M.5 1.500c3-1 6-1 9 1 3-2 6-2 9-1v16c-3-1-6-1-9 1-3-2-6-2-9-1zM9.500 2.500v16M3 6h4M3 9h4M3 12h4M12 6h4M12 9h4M12 12h4" />
        </Svg>
        <Svg w={20} h={20} ml={26}>
          <path fill="none" stroke="#777" d="M2.500 2.500h15v10h-15zM10 12.500v6M5 18.500h10M5 6.500h10" />
          <rect width="20" height="2" fill="#777" />
        </Svg>
        <Svg w={11} h={3} ml={18}>
          <rect width="11" height="3" fill="#777" />
        </Svg>
        <ZoomTrack>
          <ZoomTick />
          <ZoomThumb />
        </ZoomTrack>
        <Svg w={12} h={12} ml={6}>
          <path fill="#777" d="M5 0h2v5h5v2H7v5H5V7H0V5h5z" />
        </Svg>
        <StatusText $ml={13} $size={20}>26%</StatusText>
        <Svg w={17} h={18} ml={17}>
          <path fill="none" stroke="#777" d="M.5.500h16v17H.5zM8.500 3v3M8.500 12v3M3 9h3M11 9h3" />
        </Svg>
      </StatusRight>
    </StatusBar>
  </Window>
);

export default App;
